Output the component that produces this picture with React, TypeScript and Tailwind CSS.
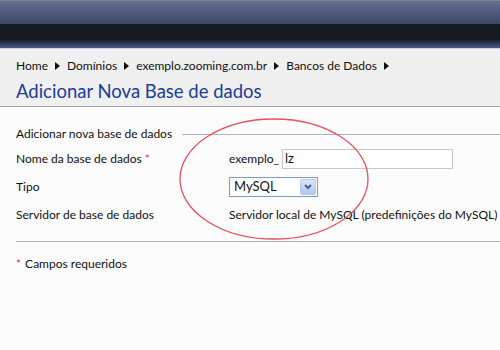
import React from "react";

const Arrow = () => (
  <svg width="5" height="8" viewBox="0 0 5 8" className="mx-[7px] inline-block">
    <path d="M0 0 L5 4 L0 8 Z" fill="#111" />
  </svg>
);

export default function App() {
  return (
    <div
      className="relative w-[500px] h-[350px] overflow-hidden bg-[#fcfcfc] text-[12px] text-[#111]"
      style={{ fontFamily: 'Lato, "Open Sans", sans-serif' }}
    >
      {/* header */}
      <div className="h-[1px] bg-[#85857a]" />
      <div className="h-[23px] bg-gradient-to-b from-[#636f96] to-[#3d4562]" />
      <div className="h-[16px] bg-[#181a22]" />
      <div className="h-[8px] bg-gradient-to-b from-[#1e2230] to-[#4a5a88]" />
      <div className="h-[1px] bg-[#c8d0e8]" />

      {/* breadcrumb area */}
      <div className="bg-[#f0f0f0] border-b border-[#a8a8b0] px-4 pt-[7px] h-[58px]">
        <div className="flex items-center h-[20px] text-[12px]">
          <span>Home</span>
          <Arrow />
          <span>Domínios</span>
          <Arrow />
          <span>exemplo.zooming.com.br</span>
          <Arrow />
          <span>Bancos de Dados</span>
          <Arrow />
        </div>
        <div className="mt-[2px] text-[18.5px] leading-[26px] text-[#1a3c9c]">
          Adicionar Nova Base de dados
        </div>
      </div>

      {/* form */}
      <div className="pl-4 pt-[17px]">
        <div className="flex items-center h-[20px]">
          <span>Adicionar nova base de dados</span>
          <div className="flex-1 h-[1px] bg-[#a9b4c8] ml-[10px]" />
        </div>
        <div className="flex items-center h-[28px] mt-[1px]">
          <span className="w-[213px]">
            Nome da base de dados <span className="text-[#e04040]">*</span>
          </span>
          <span>exemplo_</span>
          <div className="ml-[3px] w-[171px] h-[20px] border border-[#c8c8c8] bg-white flex items-center pl-[2px] text-[13px]">
            lz
          </div>
        </div>
        <div className="flex items-center h-[28px]">
          <span className="w-[213px]">Tipo</span>
          <div className="w-[89px] h-[20px] border border-[#7f9db9] bg-white flex items-center justify-between pl-[4px] pr-[1px] text-[13px]">
            <span>MySQL</span>
            <div className="w-[16px] h-[16px] rounded-[2px] border border-[#b8c8ec] bg-gradient-to-b from-[#dbe5fb] to-[#b4c6f0] flex items-center justify-center">
              <svg width="8" height="6" viewBox="0 0 8 6">
                <path d="M1 1 L4 4 L7 1" stroke="#4d6185" strokeWidth="2" fill="none" />
              </svg>
            </div>
          </div>
        </div>
        <div className="flex items-center h-[28px] whitespace-nowrap">
          <span className="w-[213px] shrink-0">Servidor de base de dados</span>
          <span>Servidor local de MySQL (predefinições do MySQL)</span>
        </div>
        <div className="h-[1px] bg-[#a9b4c8] mt-[12px]" />
        <div className="mt-[12px] h-[20px] flex items-center">
          <span className="text-[#e04040] mr-[4px]">*</span>Campos requeridos
        </div>
      </div>

      {/* annotation ellipse */}
      <svg className="absolute left-0 top-0 pointer-events-none" width="500" height="350">
        <ellipse cx="274" cy="179" rx="94" ry="60" fill="none" stroke="#e8505c" strokeWidth="1.3" />
      </svg>
    </div>
  );
}
